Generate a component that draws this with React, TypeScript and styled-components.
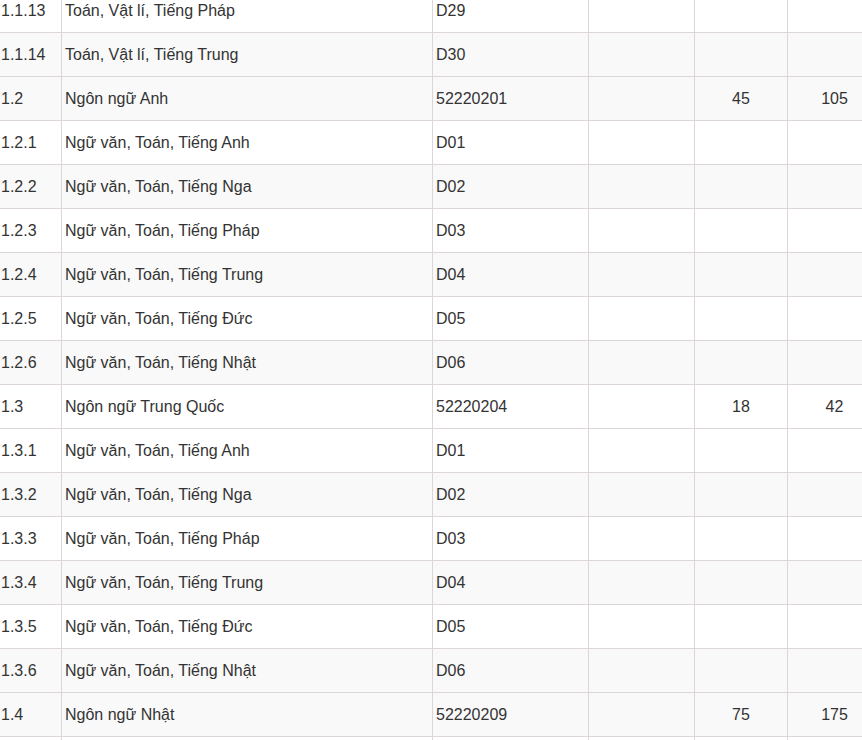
import React from "react";
import styled, { createGlobalStyle } from "styled-components";

const Global = createGlobalStyle`
  html, body { margin: 0; padding: 0; background: #fff; }
  body { font-family: "Liberation Sans", Arial, sans-serif; overflow: hidden; }
`;

const Viewport = styled.div`
  width: 862px;
  height: 740px;
  overflow: hidden;
`;

const Table = styled.table`
  border-collapse: collapse;
  table-layout: fixed;
  width: 884px;
  margin: -12px 0 0 -3px;
  font-size: 16px;
  color: #333;
`;

const Col = styled.col<{ $w: number }>`
  width: ${(p) => p.$w}px;
`;

const Row = styled.tr<{ $shade?: boolean }>`
  background: ${(p) => (p.$shade ? "#f9f9f9" : "#fff")};
`;

const Cell = styled.td<{ $center?: boolean }>`
  height: 43px;
  padding: 0 3px 0 3px;
  border: 1px solid #ddd6d8;
  text-align: ${(p) => (p.$center ? "center" : "left")};
  vertical-align: middle;
  white-space: nowrap;
  overflow: hidden;
  line-height: 20px;
`;

type R = { id: string; name: string; code: string; a?: string; b?: string; shade?: boolean };

const rows: R[] = [
  { id: "1.1.13", name: "Toán, Vật lí, Tiếng Pháp", code: "D29" },
  { id: "1.1.14", name: "Toán, Vật lí, Tiếng Trung", code: "D30", shade: true },
  { id: "1.2", name: "Ngôn ngữ Anh", code: "52220201", a: "45", b: "105", shade: true },
  { id: "1.2.1", name: "Ngữ văn, Toán, Tiếng Anh", code: "D01" },
  { id: "1.2.2", name: "Ngữ văn, Toán, Tiếng Nga", code: "D02", shade: true },
  { id: "1.2.3", name: "Ngữ văn, Toán, Tiếng Pháp", code: "D03" },
  { id: "1.2.4", name: "Ngữ văn, Toán, Tiếng Trung", code: "D04", shade: true },
  { id: "1.2.5", name: "Ngữ văn, Toán, Tiếng Đức", code: "D05" },
  { id: "1.2.6", name: "Ngữ văn, Toán, Tiếng Nhật", code: "D06", shade: true },
  { id: "1.3", name: "Ngôn ngữ Trung Quốc", code: "52220204", a: "18", b: "42" },
  { id: "1.3.1", name: "Ngữ văn, Toán, Tiếng Anh", code: "D01" },
  { id: "1.3.2", name: "Ngữ văn, Toán, Tiếng Nga", code: "D02", shade: true },
  { id: "1.3.3", name: "Ngữ văn, Toán, Tiếng Pháp", code: "D03" },
  { id: "1.3.4", name: "Ngữ văn, Toán, Tiếng Trung", code: "D04", shade: true },
  { id: "1.3.5", name: "Ngữ văn, Toán, Tiếng Đức", code: "D05" },
  { id: "1.3.6", name: "Ngữ văn, Toán, Tiếng Nhật", code: "D06", shade: true },
  { id: "1.4", name: "Ngôn ngữ Nhật", code: "52220209", a: "75", b: "175", shade: true },
  { id: "", name: "", code: "" },
];

const widths = [64, 371, 156, 106, 93, 94];

export default function App() {
  return (
    <Viewport>
      <Global />
      <Table>
        <colgroup>
          {widths.map((w, i) => (
            <Col key={i} $w={w} />
          ))}
        </colgroup>
        <tbody>
          {rows.map((r, i) => (
            <Row key={i} $shade={r.shade}>
              <Cell>{r.id}</Cell>
              <Cell>{r.name}</Cell>
              <Cell>{r.code}</Cell>
              <Cell />
              <Cell $center>{r.a}</Cell>
              <Cell $center>{r.b}</Cell>
            </Row>
          ))}
        </tbody>
      </Table>
    </Viewport>
  );
}
